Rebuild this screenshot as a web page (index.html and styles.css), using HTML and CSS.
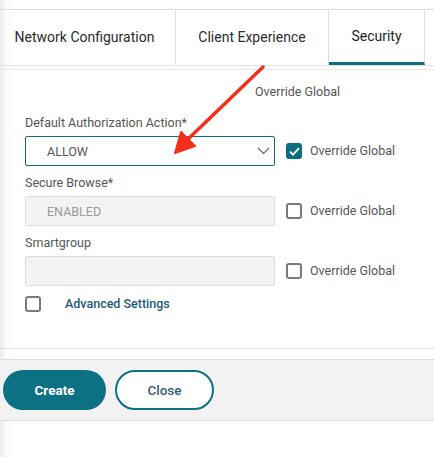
FILE: index.html
```html
<!DOCTYPE html>
<html>
<head>
<meta charset="utf-8">
<link rel="stylesheet" href="styles.css">
</head>
<body>
<div class="page">
  <div class="topbar"></div>
  <div class="tabs">
    <div class="tab tab-net">Network Configuration</div>
    <div class="tab tab-client">Client Experience</div>
    <div class="tab tab-sec active">Security</div>
    <div class="tab-rest"></div>
  </div>
  <div class="content">
    <div class="col-head">Override Global</div>
    <div class="field-label first">Default Authorization Action*</div>
    <div class="row">
      <div class="select">
        <span class="value">ALLOW</span>
        <svg class="chev" width="13" height="8" viewBox="0 0 13 8"><path d="M1 1 L6.5 6.5 L12 1" fill="none" stroke="#666" stroke-width="1.2"/></svg>
      </div>
      <span class="cb checked"><svg width="11" height="9" viewBox="0 0 11 9"><path d="M1 4.6 L4 7.6 L10 1.2" fill="none" stroke="#fff" stroke-width="1.8"/></svg></span>
      <span class="cb-text">Override Global</span>
    </div>
    <div class="field-label">Secure Browse*</div>
    <div class="row">
      <div class="input disabled"><span class="value dim">ENABLED</span></div>
      <span class="cb"></span>
      <span class="cb-text">Override Global</span>
    </div>
    <div class="field-label">Smartgroup</div>
    <div class="row">
      <div class="input disabled"></div>
      <span class="cb"></span>
      <span class="cb-text">Override Global</span>
    </div>
    <div class="adv-row">
      <span class="cb"></span>
      <span class="adv-text">Advanced Settings</span>
    </div>
  </div>
  <div class="footer-sep"></div>
  <div class="footer">
    <button class="btn btn-primary">Create</button>
    <button class="btn btn-secondary">Close</button>
  </div>
  <svg class="annot" width="434" height="457" viewBox="0 0 434 457">
    <path d="M263 67 L184 143" fill="none" stroke="#f4301a" stroke-width="3.5" stroke-linecap="round"/>
    <path d="M175 153 L181 132 L195 146 Z" fill="#f4301a" stroke="#f4301a" stroke-width="2" stroke-linejoin="round"/>
  </svg>
</div>
</body>
</html>
```
FILE: styles.css
```css
html, body {
  margin: 0;
  padding: 0;
}
body {
  width: 434px;
  height: 457px;
  overflow: hidden;
  background: linear-gradient(to right, #ececec 0, #fafafa 6px, #fff 12px);
  font-family: Roboto, "Noto Sans", "Liberation Sans", sans-serif;
  color: #555;
}
.page {
  position: relative;
  width: 434px;
  height: 457px;
}
.topbar {
  height: 9px;
  border-bottom: 1px solid #dedede;
}
.tabs {
  display: flex;
  height: 55px;
  border-bottom: 1px solid #e2e2e2;
}
.tab {
  display: flex;
  align-items: center;
  justify-content: center;
  font-size: 14px;
  color: #2b2b2b;
  border-right: 1px solid #dedede;
  box-sizing: border-box;
  padding-bottom: 2px;
}
.tab-net { width: 176px; padding-right: 6px; }
.tab-client { width: 153px; }
.tab-sec { width: 96px; }
.tab.active {
  border-bottom: 3px solid #0b6f80;
  padding-bottom: 0;
  color: #1e1e1e;
}
.tab-rest { flex: 1; }
.content {
  margin-top: 3px;
  border-top: 1px solid #e8e8e8;
  padding: 14px 0 0 25px;
  height: 279px;
  box-sizing: border-box;
}
.col-head {
  margin-left: 230px;
  font-size: 12.5px;
  line-height: 16px;
  color: #555;
}
.field-label {
  font-size: 12.5px;
  line-height: 16px;
  margin-top: 9px;
  margin-bottom: 5px;
  color: #555;
}
.field-label.first {
  margin-top: 15px;
}
.row {
  display: flex;
  align-items: center;
}
.select, .input {
  width: 250px;
  height: 30px;
  box-sizing: border-box;
  border-radius: 2px;
  display: flex;
  align-items: center;
  padding-left: 21px;
  font-size: 12.5px;
}
.select {
  border: 1px solid #0b6f80;
  background: #fff;
  justify-content: space-between;
  padding-right: 4px;
}
.input.disabled {
  border: 1px solid #dcdcdc;
  background: #f3f3f3;
}
.value { color: #555; }
.value.dim { color: #9a9a9a; }
.chev { display: block; }
.cb {
  width: 16px;
  height: 16px;
  box-sizing: border-box;
  border: 2px solid #7a7a7a;
  border-radius: 3px;
  margin-left: 11px;
  display: flex;
  align-items: center;
  justify-content: center;
  flex: none;
}
.cb.checked {
  background: #0b6f80;
  border-color: #0b6f80;
}
.cb-text {
  margin-left: 8px;
  font-size: 12.5px;
  color: #555;
  margin-top: -2px;
}
.adv-row {
  display: flex;
  align-items: center;
  margin-top: 10px;
}
.adv-row .cb {
  margin-left: 0;
}
.adv-text {
  margin-left: 24px;
  font-size: 12.5px;
  font-weight: 500;
  color: #1d5a78;
  margin-top: -2px;
}
.footer-sep {
  height: 10px;
  border-top: 1px solid #e0e0e0;
}
.footer {
  height: 60px;
  border-top: 1px solid #dedede;
  border-bottom: 1px solid #dedede;
  background: #f2f2f2;
  display: flex;
  align-items: center;
  padding-left: 3px;
  gap: 9px;
}
.btn {
  height: 40px;
  border-radius: 20px;
  font-family: Roboto, "Noto Sans", "Liberation Sans", sans-serif;
  font-size: 13.5px;
  font-weight: 700;
  box-sizing: border-box;
  cursor: pointer;
}
.btn-primary {
  width: 103px;
  background: #0b7183;
  border: none;
  color: #fff;
}
.btn-secondary {
  width: 99px;
  background: #fff;
  border: 2px solid #0b7183;
  color: #32606e;
  font-weight: 500;
}
.annot {
  position: absolute;
  left: 0;
  top: 0;
  pointer-events: none;
}
```
